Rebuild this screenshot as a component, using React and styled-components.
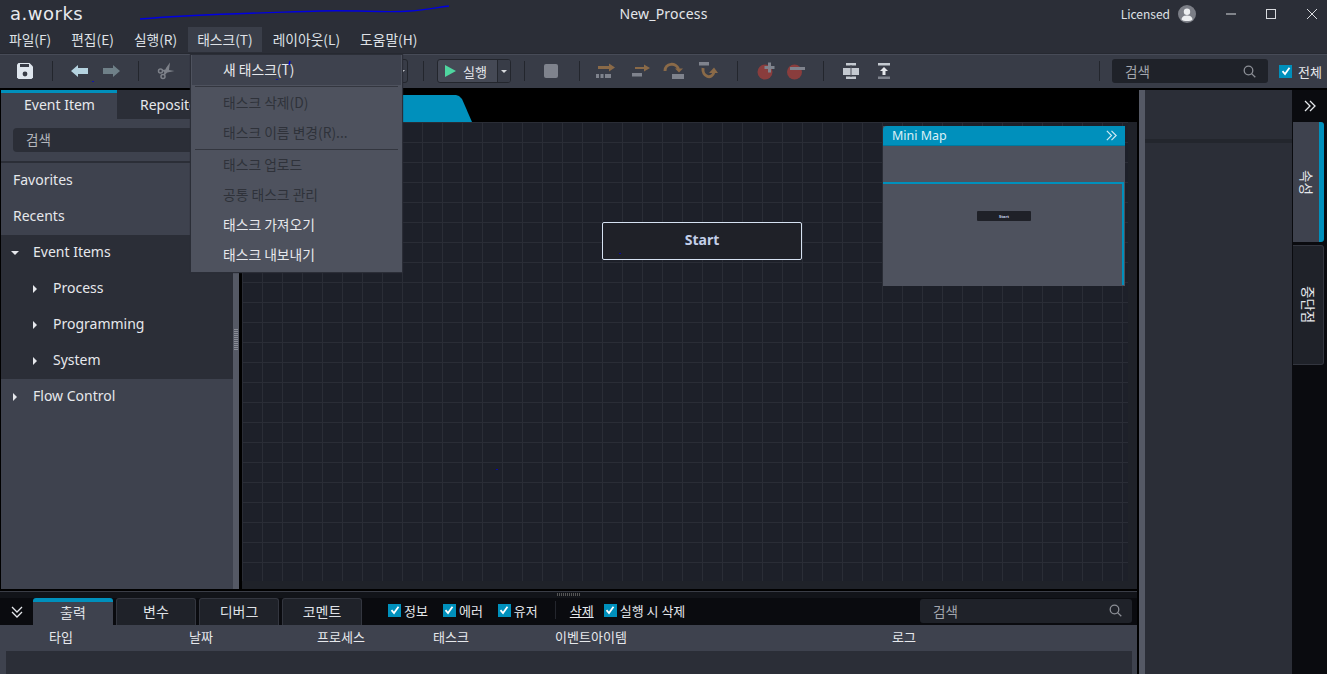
import React from "react";
import styled, { createGlobalStyle } from "styled-components";

const Global = createGlobalStyle`
  html, body { margin: 0; padding: 0; background: #000; overflow: hidden; }
  * { box-sizing: border-box; }
  body { font-family: "Noto Sans CJK KR", "Noto Sans", sans-serif; font-size: 14px; color: #e6e8ec; }
`;

const Page = styled.div`
  position: relative; width: 1327px; height: 674px; overflow: hidden;
  display: flex; flex-direction: column; background: #000;
`;
const TitleBar = styled.div`
  height: 27px; background: #2b2e37; display: grid; grid-template-columns: 1fr auto 1fr; align-items: center;
`;
const Logo = styled.div`
  padding-left: 10px; font-family: "DejaVu Sans", sans-serif; font-size: 18px; letter-spacing: 0.5px; color: #e8eaee; line-height: 27px;
`;
const Title = styled.div`
  font-family: "Noto Sans", sans-serif; font-size: 14px; letter-spacing: 0.2px; color: #e4e6ea;
`;
const TitleRight = styled.div`
  display: flex; justify-content: flex-end; align-items: center; font-size: 12px; color: #dfe1e6; padding-right: 9px;
`;
const Avatar = styled.span`
  width: 18px; height: 18px; margin-left: 8px; margin-right: 30px; display: flex;
`;
const WinBtn = styled.span`
  width: 12px; height: 12px; margin-left: ${p => p.$ml}px; display: flex;
`;
const MenuBar = styled.div`
  height: 27px; background: #2b2e37; display: flex; gap: 2px;
  border-bottom: 1px solid #262931;
`;
const MenuItem = styled.div`
  height: 25px; padding: 0 9px; line-height: 24px; font-size: 13.75px; color: #dfe1e6;
  background: ${p => (p.$open ? "#3a3e49" : "transparent")};
`;
const Toolbar = styled.div`
  height: 34px; background: #383c47; border-top: 1px solid #474b57; display: flex; align-items: center; padding: 0 5px 1px 10px;
`;
const Slot = styled.span`
  width: 30px; height: 24px; margin-left: ${p => p.$ml || 0}px; display: flex; align-items: center; justify-content: center; flex: none;
`;
const Sep = styled.span`
  width: 1px; height: 20px; background: #23262d; margin-left: ${p => p.$ml || 0}px; flex: none;
`;
const Combo = styled.div`
  width: 218px; height: 24px; margin-left: 9px; border: 1px solid #23262d; border-radius: 3px; flex: none; display: flex; justify-content: flex-end; align-items: center; padding-right: 2px;
`;
const Caret = styled.span`
  width: 0; height: 0; border-left: 3px solid transparent; border-right: 3px solid transparent; border-top: 3px solid #d8dade;
`;
const RunButton = styled.div`
  width: 74px; height: 24px; margin-left: 13px; border: 1px solid #23262d; border-radius: 3px; display: flex; flex: none; overflow: hidden; background: #454955;
`;
const RunMain = styled.div`
  width: 60px; display: flex; align-items: center; gap: 7px; padding-left: 7px; font-size: 13px; color: #e6e8ec; border-right: 1px solid #23262d;
`;
const RunDrop = styled.div`
  flex: 1; display: flex; align-items: center; justify-content: center; background: #383c47;
`;
const ToolRight = styled.div`
  margin-left: auto; display: flex; align-items: center;
`;
const SearchBox = styled.div`
  height: 24px; background: #1f2229; border-radius: 3px; display: flex; align-items: center; justify-content: space-between; color: #a4a7ae; font-size: 13.5px; flex: none;
  width: ${p => p.$w}px; padding: 0 ${p => p.$pr || 12}px ${p => p.$pb || 0}px 13px; margin-left: ${p => p.$ml || 0}px;
`;
const Check = styled.span`
  width: 13px; height: 13px; background: #0090bc; display: inline-flex; align-items: center; justify-content: center; flex: none;
  margin-left: ${p => p.$ml || 0}px;
`;
const CheckLabel = styled.span`
  font-size: 13px; color: #e4e6ea; margin-left: ${p => p.$ml || 3}px;
`;
const Main = styled.div`
  flex: 1; min-height: 0; display: flex; padding-top: 2px;
`;
const Work = styled.div`
  width: 1137px; display: flex; flex-direction: column; flex: none;
`;
const TopArea = styled.div`
  height: 499px; display: flex; flex: none;
`;
const LeftPanel = styled.div`
  width: 232px; margin-left: 1px; background: #3e424e; display: flex; flex-direction: column; flex: none;
`;
const PanelTabs = styled.div`
  height: 29px; display: flex; flex: none; background: #2b2e37;
`;
const PanelTab = styled.div`
  width: ${p => p.$w}px; height: 29px; padding-left: ${p => p.$pl}px; font-size: 14px; line-height: 24px; color: #e6e8ec;
  background: ${p => (p.$active ? "#3e424e" : "#2b2e37")};
  border-top: 3px solid ${p => (p.$active ? "#0090bc" : "transparent")};
  font-family: "Noto Sans", sans-serif;
`;
const PanelSearch = styled.div`
  height: 44px; padding: 9px 12px 9px 12px; flex: none; border-bottom: 2px solid #2b2e37;
`;
const SearchField = styled.div`
  height: 24px; background: #2b2e37; border-radius: 4px; padding-left: 13px; font-size: 13.5px; line-height: 22px; color: #b4b7bd;
`;
const Row = styled.div`
  height: 36px; flex: none; display: flex; align-items: center; font-family: "Noto Sans", sans-serif; font-size: 14px; color: #e6e8ec;
  padding-left: ${p => p.$indent}px; padding-bottom: 4px; background: ${p => (p.$dark ? "#2b2e37" : "transparent")};
`;
const Tri = styled.span`
  width: 0; height: 0; flex: none; margin-right: ${p => p.$mr}px; position: relative; top: 2px;
  ${p => p.$open
    ? "border-left:4px solid transparent;border-right:4px solid transparent;border-top:4px solid #e6e8ec;"
    : "border-top:4px solid transparent;border-bottom:4px solid transparent;border-left:4px solid #e6e8ec;"}
`;
const VSplit = styled.div`
  width: 6px; background: #555965; margin-right: 3px; flex: none; display: flex; align-items: center; justify-content: center;
`;
const Grip = styled.span`
  width: 4px; height: 22px; background: repeating-linear-gradient(#8a8d96 0 1px, transparent 1px 2px);
`;
const CanvasCol = styled.div`
  flex: 1; min-width: 0; display: flex; flex-direction: column;
`;
const DocStrip = styled.div`
  height: 32px; flex: none; display: flex; align-items: flex-end;
`;
const DocTab = styled.div`
  width: 230px; height: 27px; background: #0090bc; clip-path: polygon(0 0, 214px 0, 217px 1px, 220px 4px, 230px 27px, 0 27px);
`;
const CanvasFrame = styled.div`
  flex: 1; min-height: 0; display: flex; padding: 0 9px 8px 0; background: #1f2229;
`;
const Canvas = styled.div`
  flex: 1; position: relative; background-color: #1d2029;
  background-image: linear-gradient(#2a2d36 1px, transparent 1px), linear-gradient(90deg, #2a2d36 1px, transparent 1px);
  background-size: 20px 20px;
`;
const StartNode = styled.div`
  position: absolute; left: 360px; top: 100px; width: 200px; height: 38px; background: #1f2128; border: 1px solid #d6e2f2; border-radius: 2px; padding-bottom: 4px;
  display: flex; align-items: center; justify-content: center; font-family: "Noto Sans", sans-serif; font-weight: 700; font-size: 14px; color: #c3cfe8;
`;
const MiniMap = styled.div`
  position: absolute; right: 3px; top: 4px; width: 242px; height: 160px; background: #4e525e; display: flex; flex-direction: column;
`;
const MiniHead = styled.div`
  height: 20px; background: #0090bc; border-bottom: 1px solid #007a9f; border-top-left-radius: 4px; display: flex; align-items: center; justify-content: space-between; padding: 0 7px 0 9px;
  font-family: "Noto Sans", sans-serif; font-size: 12.5px; color: #dcf0f7; flex: none;
`;
const MiniBody = styled.div`
  flex: 1; position: relative;
`;
const MiniView = styled.div`
  position: absolute; left: 0; right: 1px; top: 36px; bottom: 1px; border-top: 2px solid #0090bc; border-right: 2px solid #0090bc;
`;
const MiniNode = styled.div`
  position: absolute; left: 94px; top: 65px; width: 54px; height: 10px; background: #1f2128; border-radius: 1px;
  display: flex; align-items: center; justify-content: center; font-family: "Noto Sans", sans-serif; font-size: 4px; font-weight: 700; color: #c3cfe8;
`;
const HSplit = styled.div`
  height: 9px; flex: none; position: relative; background: #121419; border-top: 2px solid #000; display: flex; justify-content: center; align-items: center;
  &::before { content: ""; position: absolute; left: 0; right: 0; top: 0; height: 1px; background: #3a3d46; }
`;
const HGrip = styled.span`
  width: 24px; height: 3px; background: repeating-linear-gradient(90deg, #555 0 1px, transparent 1px 2px);
`;
const Bottom = styled.div`
  flex: 1; min-height: 0; display: flex; flex-direction: column; background: #3e424e;
`;
const BottomBar = styled.div`
  height: 27px; flex: none; background: #0a0b0f; display: flex; align-items: stretch; position: relative;
`;
const Collapse = styled.span`
  width: 33px; display: flex; align-items: center; justify-content: center; flex: none;
`;
const OutTab = styled.div`
  width: 80px; margin-right: 3px; flex: none; text-align: center; font-size: 14px; line-height: ${p => (p.$active ? 20 : 24)}px; color: #dfe1e6; border-radius: 3px 3px 0 0;
  background: ${p => (p.$active ? "#3e424e" : "#1f2229")};
  border: ${p => (p.$active ? "0" : "1px solid #33363f")};
  border-top: ${p => (p.$active ? "4px solid #0090bc" : "1px solid #33363f")};
  border-bottom: 0;
`;
const Filters = styled.div`
  display: flex; align-items: center; margin-left: 23px; flex: none; height: 24px;
`;
const FilterSep = styled.span`
  width: 1px; height: 18px; background: #24262d; margin-left: 17px;
`;
const ClearLink = styled.span`
  font-size: 13px; color: #e8eaee; text-decoration: underline; margin-left: 14px;
`;
const BottomSearch = styled.div`
  margin-left: auto; margin-right: 5px; padding-top: 1px;
`;
const LogHead = styled.div`
  height: 26px; flex: none; display: grid; grid-template-columns: 122px 158px 122px 98px 182px 444px; align-items: center; font-size: 13px; color: #e6e8ec; text-align: center; padding-bottom: 4px;
`;
const LogBody = styled.div`
  flex: 1; margin: 0 5px 0 6px; background: #2b2e37;
`;
const RSplit = styled.div`
  width: 6px; margin-left: 2px; flex: none; background: #555965;
`;
const RightPanel = styled.div`
  width: 147px; flex: none; background: #2b2e37;
`;
const RightHead = styled.div`
  height: 53px; border-bottom: 4px solid #23262d;
`;
const Rail = styled.div`
  width: 35px; flex: none; background: #0a0b0f; display: flex; flex-direction: column; padding-left: 1px;
`;
const RailTop = styled.div`
  height: 32px; flex: none; display: flex; align-items: center; justify-content: center;
`;
const RailTab = styled.div`
  width: 31px; height: 120px; flex: none; margin-bottom: ${p => p.$mb || 0}px; border-radius: 0 3px 3px 0;
  display: flex; align-items: center; justify-content: center;
  background: ${p => (p.$active ? "#3e424e" : "#1f2229")};
  border: ${p => (p.$active ? "0" : "1px solid #33363f")};
  border-left: 0;
  border-right: ${p => (p.$active ? "5px solid #0090bc" : "1px solid #33363f")};
`;
const RailLabel = styled.span`
  writing-mode: vertical-rl; text-orientation: sideways; font-size: 13.5px; color: #e6e8ec; line-height: 1;
`;
const TaskMenu = styled.div`
  position: absolute; left: 190px; top: 54px; width: 213px; height: 219px; background: #4e525e; border: 1px solid #2b2e37; display: flex; flex-direction: column; padding: 0 1px;
  box-shadow: 0 0 1px #2b2e37;
`;
const TaskItem = styled.div`
  height: 30px; flex: none; padding-left: 31px; line-height: 29px; font-size: 13.8px;
  color: ${p => (p.$disabled ? "#2f323a" : "#e6e8ec")};
  background: ${p => (p.$hl ? "#3e424e" : "transparent")};
`;
const TaskSep = styled.div`
  height: 1px; margin: ${p => p.$my}; background: #33363f; flex: none;
`;
const Scribble = styled.svg`
  position: absolute; left: 0; top: 0; pointer-events: none;
`;

const CheckMark = () => (
  <svg width="10" height="10" viewBox="0 0 10 10"><path d="M1.5 5.2 4 8 8.5 1.8" fill="none" stroke="#fff" strokeWidth="1.8" /></svg>
);
const Magnifier = () => (
  <svg width="13" height="13" viewBox="0 0 13 13" fill="none" stroke="#8c8f96" strokeWidth="1.3"><circle cx="5.5" cy="5.5" r="4.3" /><path d="M8.6 8.6 12.3 12.3" /></svg>
);
const Chevrons = ({ color = "#e6e8ec", size = 14 }) => (
  <svg width={size} height={size} viewBox="0 0 14 14" fill="none" stroke={color} strokeWidth="1.3"><path d="M2 2 7 7 2 12M7 2 12 7 7 12" /></svg>
);
const ChevronsDown = () => (
  <svg width="14" height="14" viewBox="0 0 14 14" fill="none" stroke="#e6e8ec" strokeWidth="1.3"><path d="M2 2 7 7 12 2M2 7 7 12 12 7" /></svg>
);

const SaveIcon = () => (
  <svg width="16" height="16" viewBox="0 0 16 16"><path d="M0 1.5 1.5 0H12.5L16 3.5V14.5L14.5 16H1.5L0 14.5Z" fill="#dfe6ee" /><rect x="3" y="1" width="9" height="3" fill="#383c47" /><circle cx="8" cy="11" r="2.4" fill="#383c47" /></svg>
);
const BackIcon = () => (
  <svg width="18" height="12" viewBox="0 0 18 12"><path d="M0 6 7 0V3H17V9H7V12Z" fill="#b5d3e0" /></svg>
);
const ForwardIcon = () => (
  <svg width="18" height="12" viewBox="0 0 18 12"><path d="M18 6 11 0V3H1V9H11V12Z" fill="#6f8088" /></svg>
);
const Scissors = () => (
  <svg width="18" height="18" viewBox="0 0 18 18"><circle cx="3.5" cy="9" r="2" fill="none" stroke="#7d8189" strokeWidth="1.5" /><circle cx="6" cy="14.5" r="2" fill="none" stroke="#7d8189" strokeWidth="1.5" /><path d="M5 8 9 7.5 17.5 9 8 11Z" fill="#7d8189" /><path d="M6.5 12.5 9 6 13 0.5 12 8 8 13Z" fill="#7d8189" /></svg>
);
const PlayIcon = () => (
  <svg width="11" height="12" viewBox="0 0 11 12"><path d="M0 0 11 6 0 12Z" fill="#4fd6a0" /></svg>
);
const StopIcon = () => (
  <svg width="14" height="14" viewBox="0 0 14 14"><rect width="14" height="14" rx="2" fill="#7f838d" /></svg>
);
const B = "#8a6a48", G = "#7f838d", R = "#8a3d3d", W = "#c4c9d0";
const StepInto = () => (
  <svg width="22" height="16" viewBox="0 0 22 16"><path d="M3 3H14V0.5L20 4.5 14 8.5V6H3Z" fill={B} /><rect x="1" y="11" width="3" height="4" fill={G} /><rect x="5.5" y="11" width="3" height="4" fill={G} /><rect x="10" y="11" width="6" height="4" fill={G} /></svg>
);
const StepNext = () => (
  <svg width="20" height="14" viewBox="0 0 20 14"><path d="M4 3H13V0.5L19 4 13 7.5V5H4Z" fill={B} /><rect x="1" y="9" width="10" height="3.5" fill={G} /></svg>
);
const StepOver = () => (
  <svg width="22" height="18" viewBox="0 0 22 18"><path d="M2 9C2 1 13 0 15.5 7" fill="none" stroke={B} strokeWidth="3" /><path d="M12 6.5H20L16 10.5Z" fill={B} /><rect x="9" y="12" width="12" height="5" fill={G} /></svg>
);
const StepOut = () => (
  <svg width="20" height="18" viewBox="0 0 20 18"><rect x="1" y="0" width="10" height="3.5" fill={G} /><path d="M5 6C4 15 14 18 16 10" fill="none" stroke={B} strokeWidth="3" /><path d="M11 11 16 5.5 20 11Z" fill={B} /></svg>
);
const BpAdd = () => (
  <svg width="18" height="18" viewBox="0 0 18 18"><circle cx="8" cy="10" r="7.5" fill={R} /><path d="M7.5 5.5H17.5M12.5 0.5V10.5" stroke={G} strokeWidth="3" fill="none" /></svg>
);
const BpRemove = () => (
  <svg width="18" height="18" viewBox="0 0 18 18"><circle cx="7.5" cy="10" r="7.5" fill={R} /><rect x="3" y="5" width="15" height="3" fill={G} /></svg>
);
const AlignIcon = () => (
  <svg width="16" height="16" viewBox="0 0 16 16"><rect x="3" y="0" width="10" height="2.5" fill={W} /><rect x="0" y="5" width="16" height="7" fill={W} /><rect x="3" y="13.5" width="10" height="2.5" fill={W} /><rect x="7.5" y="2" width="1" height="12" fill="#4a4e59" /></svg>
);
const TopIcon = () => (
  <svg width="14" height="16" viewBox="0 0 14 16"><rect x="1" y="0" width="12" height="2.5" fill={W} /><path d="M7 4 11 8H8.5V12H5.5V8H3Z" fill="#e6e8ec" /><rect x="1" y="13.5" width="12" height="2.5" fill={G} /></svg>
);

const menus = ["파일(F)", "편집(E)", "실행(R)", "태스크(T)", "레이아웃(L)", "도움말(H)"];
const columns = ["타입", "날짜", "프로세스", "태스크", "이벤트아이템", "로그"];

export default function App() {
  return (
    <Page>
      <Global />
      <TitleBar>
        <Logo>a.works</Logo>
        <Title>New_Process</Title>
        <TitleRight>
          Licensed
          <Avatar>
            <svg width="18" height="18" viewBox="0 0 18 18"><circle cx="9" cy="9" r="9" fill="#7b7e86" /><circle cx="9" cy="6.8" r="3.2" fill="#eceef0" /><path d="M3.5 14.5C4 11 6.5 10.5 9 10.5S14 11 14.5 14.5C13 16.5 5 16.5 3.5 14.5Z" fill="#eceef0" /></svg>
          </Avatar>
          <WinBtn $ml={0}><svg width="12" height="12" viewBox="0 0 12 12"><path d="M0 6H10" stroke="#d8dade" /></svg></WinBtn>
          <WinBtn $ml={28}><svg width="12" height="12" viewBox="0 0 12 12"><rect x="0.5" y="1.5" width="9" height="9" fill="none" stroke="#d8dade" /></svg></WinBtn>
          <WinBtn $ml={28}><svg width="12" height="12" viewBox="0 0 12 12"><path d="M1 1 11 11M11 1 1 11" stroke="#d8dade" /></svg></WinBtn>
        </TitleRight>
      </TitleBar>
      <MenuBar>
        {menus.map((m, i) => <MenuItem key={m} $open={i === 3}>{m}</MenuItem>)}
      </MenuBar>
      <Toolbar>
        <Slot><SaveIcon /></Slot>
        <Sep $ml={12} />
        <Slot $ml={12}><BackIcon /></Slot>
        <Slot $ml={1}><ForwardIcon /></Slot>
        <Sep $ml={12} />
        <Slot $ml={12}><Scissors /></Slot>
        <Combo><Caret /></Combo>
        <Sep $ml={15} />
        <RunButton>
          <RunMain><PlayIcon />실행</RunMain>
          <RunDrop><Caret /></RunDrop>
        </RunButton>
        <Sep $ml={13} />
        <Slot $ml={11}><StopIcon /></Slot>
        <Sep $ml={13} />
        <Slot $ml={11}><StepInto /></Slot>
        <Slot $ml={5}><StepNext /></Slot>
        <Slot $ml={3}><StepOver /></Slot>
        <Slot $ml={4}><StepOut /></Slot>
        <Sep $ml={14} />
        <Slot $ml={13}><BpAdd /></Slot>
        <Slot><BpRemove /></Slot>
        <Sep $ml={12} />
        <Slot $ml={12}><AlignIcon /></Slot>
        <Slot $ml={3}><TopIcon /></Slot>
        <ToolRight>
          <Sep />
          <SearchBox $w={156} $ml={12}>검색<Magnifier /></SearchBox>
          <Check $ml={11}><CheckMark /></Check>
          <CheckLabel $ml={6}>전체</CheckLabel>
        </ToolRight>
      </Toolbar>
      <Main>
        <Work>
          <TopArea>
            <LeftPanel>
              <PanelTabs>
                <PanelTab $active $w={116} $pl={23}>Event Item</PanelTab>
                <PanelTab $w={116} $pl={23}>Repository</PanelTab>
              </PanelTabs>
              <PanelSearch><SearchField>검색</SearchField></PanelSearch>
              <Row $indent={12}>Favorites</Row>
              <Row $indent={12}>Recents</Row>
              <Row $dark $indent={10}><Tri $open $mr={14} />Event Items</Row>
              <Row $dark $indent={32}><Tri $mr={16} />Process</Row>
              <Row $dark $indent={32}><Tri $mr={16} />Programming</Row>
              <Row $dark $indent={32}><Tri $mr={16} />System</Row>
              <Row $indent={12}><Tri $mr={16} />Flow Control</Row>
            </LeftPanel>
            <VSplit><Grip /></VSplit>
            <CanvasCol>
              <DocStrip><DocTab /></DocStrip>
              <CanvasFrame>
                <Canvas>
                  <StartNode>Start</StartNode>
                  <MiniMap>
                    <MiniHead>Mini Map<Chevrons color="#cfeaf3" size={13} /></MiniHead>
                    <MiniBody>
                      <MiniView />
                      <MiniNode>Start</MiniNode>
                    </MiniBody>
                  </MiniMap>
                </Canvas>
              </CanvasFrame>
            </CanvasCol>
          </TopArea>
          <HSplit><HGrip /></HSplit>
          <Bottom>
            <BottomBar>
              <Collapse><ChevronsDown /></Collapse>
              <OutTab $active>출력</OutTab>
              <OutTab>변수</OutTab>
              <OutTab>디버그</OutTab>
              <OutTab>코멘트</OutTab>
              <Filters>
                <Check><CheckMark /></Check><CheckLabel>정보</CheckLabel>
                <Check $ml={15}><CheckMark /></Check><CheckLabel>에러</CheckLabel>
                <Check $ml={15}><CheckMark /></Check><CheckLabel>유저</CheckLabel>
                <FilterSep />
                <ClearLink>삭제</ClearLink>
                <Check $ml={10}><CheckMark /></Check><CheckLabel>실행 시 삭제</CheckLabel>
              </Filters>
              <BottomSearch><SearchBox $w={212} $pr={10} $pb={1}>검색<Magnifier /></SearchBox></BottomSearch>
            </BottomBar>
            <LogHead>{columns.map(c => <span key={c}>{c}</span>)}</LogHead>
            <LogBody />
          </Bottom>
        </Work>
        <RSplit />
        <RightPanel><RightHead /></RightPanel>
        <Rail>
          <RailTop><Chevrons /></RailTop>
          <RailTab $active $mb={3}><RailLabel>속성</RailLabel></RailTab>
          <RailTab><RailLabel>중단점</RailLabel></RailTab>
        </Rail>
      </Main>
      <TaskMenu>
        <TaskItem $hl>새 태스크(T)</TaskItem>
        <TaskSep $my="1px 3px 1px" />
        <TaskItem $disabled>태스크 삭제(D)</TaskItem>
        <TaskItem $disabled>태스크 이름 변경(R)...</TaskItem>
        <TaskSep $my="1px 3px 0" />
        <TaskItem $disabled>태스크 업로드</TaskItem>
        <TaskItem $disabled>공통 태스크 관리</TaskItem>
        <TaskItem>태스크 가져오기</TaskItem>
        <TaskItem>태스크 내보내기</TaskItem>
      </TaskMenu>
      <Scribble width="1327" height="674" viewBox="0 0 1327 674">
        <path d="M140 19C200 14 260 13 320 11 360 10 385 13 410 11 425 10 440 7 449 6" fill="none" stroke="#0000e0" strokeWidth="1.4" />
        <path d="M289 65 290 61M277 79 277 80M93 81 93 82M620 253 620 254M497 469 497 470" stroke="#0000e0" strokeWidth="1.4" fill="none" />
      </Scribble>
    </Page>
  );
}
